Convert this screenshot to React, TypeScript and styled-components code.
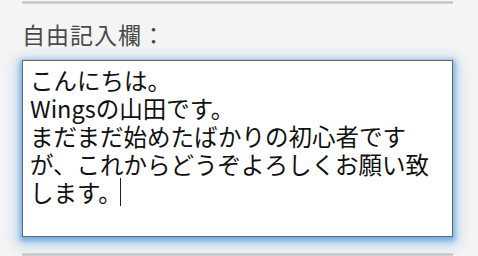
import { createGlobalStyle, styled } from 'styled-components';

const GlobalStyle = createGlobalStyle`
  html, body {
    margin: 0;
    padding: 0;
    background: #f5f5f5;
  }
`;

const lines = ['こんにちは。', 'Wingsの山田です。', 'まだまだ始めたばかりの初心者ですが、これからどうぞよろしくお願い致します。'];

export default function App() {
  return (
    <>
      <GlobalStyle />
      <Page>
        <Rule />
        <FieldLabel>自由記入欄：</FieldLabel>
        <TextBox>
          {lines.join('\n')}
          <Caret />
        </TextBox>
        <Rule $gap={16} />
      </Page>
    </>
  );
}

const Page = styled.div`
  display: flex;
  flex-direction: column;
  box-sizing: border-box;
  width: 478px;
  height: 256px;
  padding: 1px 25px 0 22px;
  overflow: hidden;
  font-family: 'Noto Sans CJK JP', 'Noto Sans', sans-serif;
  background: repeating-conic-gradient(#f1f1f1 0 25%, #f8f8f8 0 50%) 0 0 / 2px 2px;
`;

const Rule = styled.div<{ $gap?: number }>`
  flex: none;
  height: 3px;
  margin-top: ${({ $gap }) => $gap ?? 0}px;
  background: linear-gradient(#dcdcdc, #c2c2c2 50%, #dcdcdc);
`;

const FieldLabel = styled.div`
  margin-top: 18px;
  font-size: 23px;
  line-height: 24px;
  letter-spacing: 1px;
  color: #4a4a4a;
`;

const TextBox = styled.div`
  flex: none;
  box-sizing: border-box;
  height: 177px;
  margin-top: 14px;
  padding: 5px 7px;
  border: 1px solid #686868;
  background: #fff;
  box-shadow:
    0 2px 5px 2px rgba(100, 165, 225, 0.85),
    0 4px 14px 5px rgba(150, 195, 235, 0.6);
  font-size: 23.5px;
  line-height: 28px;
  color: #111;
  white-space: pre-wrap;
  word-break: normal;
  line-break: strict;
`;

const Caret = styled.span`
  display: inline-block;
  width: 1px;
  height: 28px;
  margin-left: -2px;
  vertical-align: top;
  background: #222;
`;
